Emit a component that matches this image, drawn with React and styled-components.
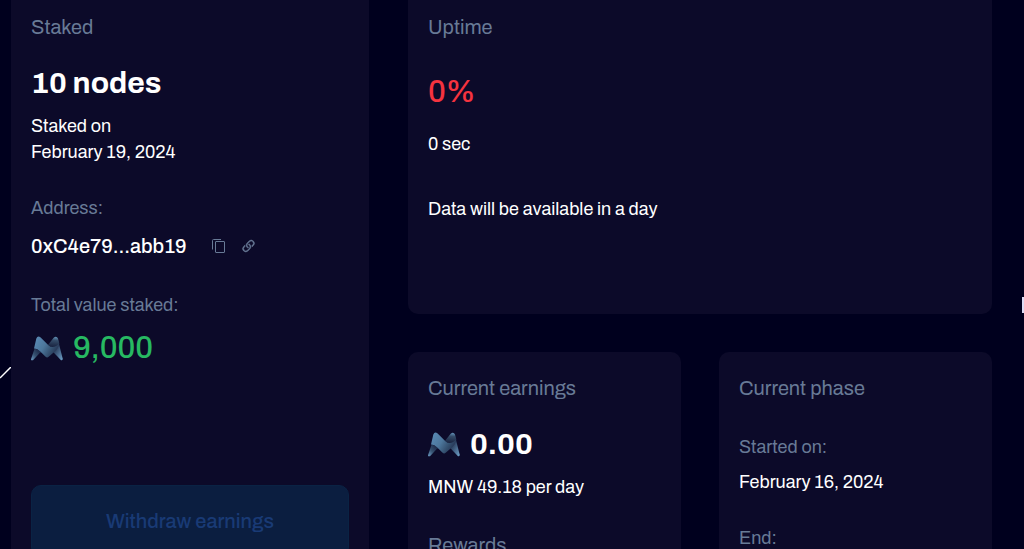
import React from 'react'
import styled, { createGlobalStyle } from 'styled-components'
import { BsLink45Deg } from 'react-icons/bs'

const colors = {
  page: '#00001e',
  card: '#0c0a29',
  muted: '#687a96',
  white: '#ffffff',
  green: '#27b962',
  red: '#f5333f',
  button: '#0b1e40',
  buttonText: '#193a75'
}

const GlobalStyle = createGlobalStyle`
  * {
    box-sizing: border-box;
  }

  body {
    margin: 0;
    background: ${colors.page};
    color: ${colors.white};
    font-family: Archivo, 'Liberation Sans', Arial, sans-serif;
  }
`

const Page = styled.main`
  position: relative;
  display: grid;
  grid-template-columns: minmax(0, 358fr) minmax(0, 584fr);
  gap: 39px;
  height: 100vh;
  padding: 0 32px 0 11px;
  overflow: hidden;
`

const Column = styled.div`
  display: flex;
  flex-direction: column;
  gap: 38px;
`

const Pair = styled.div`
  display: grid;
  grid-template-columns: 1fr 1fr;
  gap: 38px;
`

const Card = styled.section`
  display: flex;
  flex-direction: column;
  align-items: flex-start;
  padding: ${props => props.$top || 14}px 20px ${props => props.$bottom || 20}px;
  border-radius: ${props => props.$top ? '10px' : '0 0 10px 10px'};
  background: ${colors.card};
`

const Title = styled.h2`
  margin: ${props => props.$gap || 0}px 0 0;
  color: ${colors.muted};
  font-size: 20px;
  font-weight: 400;
  line-height: 26px;
`

const Label = styled.p`
  margin: ${props => props.$gap}px 0 0;
  color: ${colors.muted};
  font-size: 18px;
  line-height: 26px;
`

const Text = styled(Label)`
  color: ${colors.white};
`

const Amount = styled.div`
  display: flex;
  align-items: center;
  gap: 10px;
  margin-top: ${props => props.$gap}px;
  color: ${props => colors[props.$color || 'white']};
  font-size: ${props => props.$bold ? 30 : 31}px;
  font-weight: ${props => props.$bold ? 700 : 500};
  line-height: 40px;
`

const AddressRow = styled.div`
  display: flex;
  align-items: center;
  margin-top: 12px;
  font-size: 20px;
  font-weight: 500;
  line-height: 26px;
`

const Address = styled.span`
  margin-right: 24px;
`

const IconButton = styled.button`
  display: flex;
  margin-right: 15px;
  padding: 0;
  border: 0;
  background: none;
  color: ${colors.muted};
`

const IconLink = styled.a`
  display: flex;
  color: ${colors.muted};
  stroke-width: 0.4;
`

const Withdraw = styled.button`
  width: 100%;
  margin-top: 117px;
  padding: 22px;
  border: 1px solid #0a2344;
  border-radius: 10px;
  background: ${colors.button};
  color: ${colors.buttonText};
  font-family: inherit;
  font-size: 20px;
  font-weight: 500;
  line-height: 26px;
`

const Streak = styled.svg`
  position: absolute;
  top: 367px;
  left: 0;
`

const Marker = styled.span`
  position: absolute;
  top: 297px;
  right: 0;
  width: 2px;
  height: 16px;
  background: #dcdcf5;
`

const Logo = ({ id }) => (
  <svg width='32' height='25' viewBox='0 0 96 74' aria-hidden='true'>
    <defs>
      <linearGradient id={`${id}-left`} x1='0' y1='1' x2='0.9' y2='0.2'>
        <stop offset='0' stopColor='#6c9cc4' />
        <stop offset='0.45' stopColor='#35506f' />
        <stop offset='1' stopColor='#17203f' />
      </linearGradient>
      <linearGradient id={`${id}-right`} x1='0.2' y1='0' x2='0.9' y2='1'>
        <stop offset='0' stopColor='#273653' />
        <stop offset='0.4' stopColor='#2b3f5e' />
        <stop offset='1' stopColor='#6b9bc3' />
      </linearGradient>
      <linearGradient id={`${id}-band`} x1='0' y1='0' x2='1' y2='0.5'>
        <stop offset='0' stopColor='#5b8db8' />
        <stop offset='0.5' stopColor='#4d779c' />
        <stop offset='0.8' stopColor='#34506f' />
        <stop offset='1' stopColor='#263656' />
      </linearGradient>
      <linearGradient id={`${id}-peak`} x1='0.7' y1='0' x2='0.6' y2='1'>
        <stop offset='0' stopColor='#6596bd' />
        <stop offset='0.35' stopColor='#344c69' />
        <stop offset='1' stopColor='#17203d' />
      </linearGradient>
    </defs>
    <path d='M11 36 L0 69 Q0 74 6 72 L27 50 L35 48 Z' fill={`url(#${id}-left)`} />
    <path d='M79 4 L95 67 Q96 74 90 72 L68 49 L64 30 Z' fill={`url(#${id}-right)`} />
    <path d='M50 27 L68 5 Q76 -3 81 7 L85 22 Q72 39 58 31 Z' fill={`url(#${id}-peak)`} />
    <path
      d='M16 7 Q20 -3 29 4 L53 28 Q67 40 85 22 Q82 39 68 49 L53 62 Q48 66 43 61 L28 46 Q18 36 9 37 Z'
      fill={`url(#${id}-band)`}
    />
  </svg>
)

const CopyIcon = () => (
  <svg width='14' height='16' viewBox='0 0 14 16' fill='none' stroke='currentColor' aria-hidden='true'>
    <path d='M1.5 11.5 V2.5 Q1.5 1.5 2.5 1.5 H10' />
    <rect x='4.5' y='3.5' width='9' height='11' rx='0.5' />
  </svg>
)

export default function App () {
  return (
    <>
      <GlobalStyle />
      <Page>
        <Streak width='11' height='12' viewBox='0 0 11 12' aria-hidden='true'>
          <path d='M0 11 L11 0' stroke='#fff' strokeWidth='1.5' />
        </Streak>
        <Marker />

        <Card>
          <Title>Staked</Title>
          <Amount $gap={23} $bold>10 nodes</Amount>
          <Text $gap={10}>Staked on<br />February 19, 2024</Text>
          <Label $gap={30}>Address:</Label>
          <AddressRow>
            <Address>0xC4e79...abb19</Address>
            <IconButton type='button' aria-label='Copy address'>
              <CopyIcon />
            </IconButton>
            <IconLink href='#address' aria-label='Open address'>
              <BsLink45Deg size={17} stroke='currentColor' strokeWidth='inherit' />
            </IconLink>
          </AddressRow>
          <Label $gap={33}>Total value staked:</Label>
          <Amount $gap={10} $color='green'>
            <Logo id='staked' />
            9,000
          </Amount>
          <Withdraw type='button'>Withdraw earnings</Withdraw>
        </Card>

        <Column>
          <Card $bottom={92}>
            <Title>Uptime</Title>
            <Amount $gap={32} $color='red'>0%</Amount>
            <Text $gap={19}>0 sec</Text>
            <Text $gap={39}>Data will be available in a day</Text>
          </Card>

          <Pair>
            <Card $top={23}>
              <Title>Current earnings</Title>
              <Amount $gap={23} $bold>
                <Logo id='earnings' />
                0.00
              </Amount>
              <Text $gap={10}>MNW 49.18 per day</Text>
              <Title as='h3' $gap={32}>Rewards</Title>
            </Card>
            <Card $top={23}>
              <Title>Current phase</Title>
              <Label $gap={33}>Started on:</Label>
              <Text $gap={9}>February 16, 2024</Text>
              <Label $gap={30}>End:</Label>
            </Card>
          </Pair>
        </Column>
      </Page>
    </>
  )
}
